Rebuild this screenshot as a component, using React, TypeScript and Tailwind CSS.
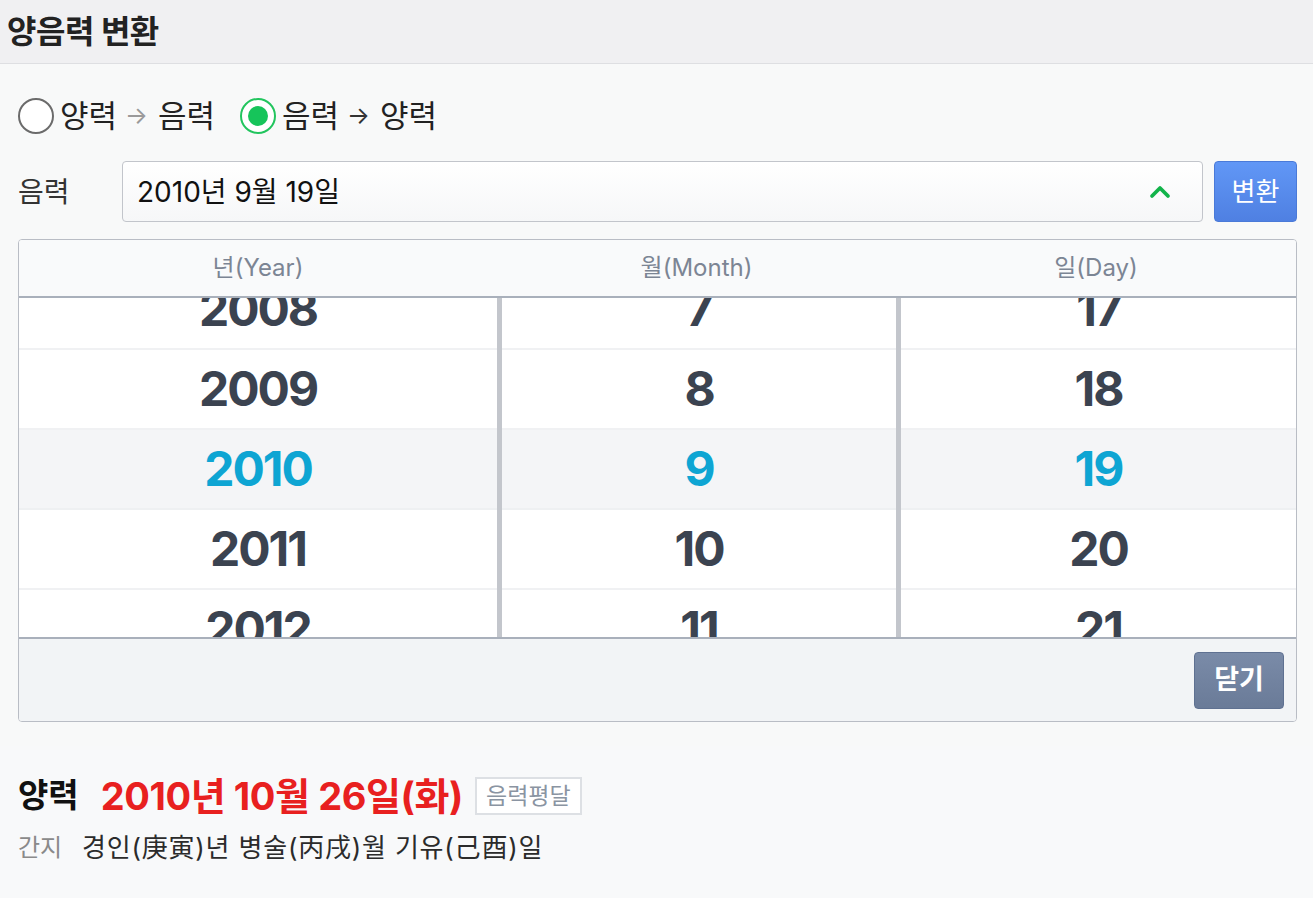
import { ChevronUp } from 'lucide-react';

const font = { fontFamily: 'Inter, "Noto Sans CJK KR", sans-serif' };

const cols = [
  { key: 'y', label: '년(Year)', items: ['2008', '2009', '2010', '2011', '2012'] },
  { key: 'm', label: '월(Month)', items: ['7', '8', '9', '10', '11'] },
  { key: 'd', label: '일(Day)', items: ['17', '18', '19', '20', '21'] },
];

function Radio({ checked }: { checked?: boolean }) {
  return checked ? (
    <span className="w-[36px] h-[36px] rounded-full border-2 border-[#22c55e] flex items-center justify-center bg-white">
      <span className="w-[20px] h-[20px] rounded-full bg-[#16c45a]" />
    </span>
  ) : (
    <span className="w-[36px] h-[36px] rounded-full border-2 border-[#6b6b6b] bg-white" />
  );
}

export default function App() {
  return (
    <div className="w-[1313px] h-[898px] bg-[#f8f9f9] text-[#111]" style={font}>
      {/* title bar */}
      <div className="h-[64px] bg-[#f0f0f2] border-b border-[#dedfe2] flex items-center px-[7px]">
        <h1 className="text-[32px] font-bold text-[#222] tracking-[-0.5px]">양음력 변환</h1>
      </div>

      <div className="pl-[18px] pr-[16px] pt-[30px]">
        {/* direction */}
        <div className="flex items-center h-[44px] text-[31px] text-[#222]">
          <label className="flex items-center">
            <Radio />
            <span className="ml-[6px]">양력</span>
            <span className="ml-[8px] text-[#9a9a9a] text-[24px]">→</span>
            <span className="ml-[10px]">음력</span>
          </label>
          <label className="flex items-center ml-[25px]">
            <Radio checked />
            <span className="ml-[6px]">음력</span>
            <span className="ml-[8px] text-[#333] text-[24px]">→</span>
            <span className="ml-[10px]">양력</span>
          </label>
        </div>

        {/* input row */}
        <div className="flex items-center mt-[23px] h-[61px]">
          <span className="w-[104px] text-[28px] text-[#333]">음력</span>
          <div className="flex-1 h-full rounded-[4px] border border-[#c2c5cb] bg-gradient-to-b from-white to-[#f6f7f8] flex items-center pl-[14px] pr-[26px]">
            <span className="flex-1 text-[28px] text-[#111]">2010년 9월 19일</span>
            <ChevronUp className="w-[32px] h-[32px] text-[#12b34a]" strokeWidth={2.8} />
          </div>
          <button className="ml-[11px] w-[83px] h-full rounded-[4px] border border-[#4a7ad8] bg-gradient-to-b from-[#6197f6] to-[#4f80e2] text-white text-[26px]">
            변환
          </button>
        </div>

        {/* picker */}
        <div className="mt-[17px] rounded-[4px] border border-[#b9bdc5] overflow-hidden bg-white">
          <div className="grid grid-cols-[478px_399px_1fr] h-[58px] bg-[#f9fafb] border-b-2 border-[#a9b0bb]">
            {cols.map((c) => (
              <div key={c.key} className="flex items-center justify-center text-[24px] text-[#7c8594]">
                {c.label}
              </div>
            ))}
          </div>
          <div className="grid grid-cols-[478px_399px_1fr] h-[339px] overflow-hidden">
            {cols.map((c, ci) => (
              <div key={c.key} className={ci > 0 ? 'border-l-[5px] border-[#c3c6cc] overflow-hidden' : 'overflow-hidden'}>
                <div className="-mt-[28px]">
                  {c.items.map((it, i) => (
                    <div
                      key={it}
                      className={
                        i === 2
                          ? 'h-[80px] flex items-center justify-center border-b-2 border-[#eef0f2] bg-[#f4f5f7] text-[48px] tracking-[-2px] font-bold text-[#0ea5d3]'
                          : 'h-[80px] flex items-center justify-center border-b-2 border-[#f0f1f3] text-[48px] tracking-[-2px] font-bold text-[#3b4350]'
                      }
                    >
                      {it}
                    </div>
                  ))}
                </div>
              </div>
            ))}
          </div>
          <div className="h-[84px] bg-[#f2f4f6] border-t-2 border-[#a9b0bb] flex items-center justify-end pr-[12px]">
            <button className="w-[90px] h-[57px] rounded-[4px] border border-[#5f7191] bg-gradient-to-b from-[#7a8ba8] to-[#6a7b98] text-white text-[27px] font-bold">
              닫기
            </button>
          </div>
        </div>
      </div>

      {/* result */}
      <div className="mt-[24px] pt-[30px] px-[18px] bg-[#f8f9fa] h-[153px]">
        <div className="flex items-center h-[40px]">
          <span className="text-[33px] font-bold text-[#111]">양력</span>
          <span className="ml-[22px] text-[38px] font-bold text-[#e8201f] tracking-[-0.4px]">2010년 10월 26일(화)</span>
          <span className="ml-[12px] h-[38px] px-[9px] flex items-center border-2 border-[#dde0e4] bg-white text-[23px] text-[#8a94a2]">
            음력평달
          </span>
        </div>
        <div className="flex items-center mt-[12px]">
          <span className="text-[#8a8a8a] w-[64px] text-[24px]">간지</span>
          <span className="text-[#2b2b2b] text-[26px] tracking-[0.8px]">경인(庚寅)년 병술(丙戌)월 기유(己酉)일</span>
        </div>
      </div>
    </div>
  );
}
